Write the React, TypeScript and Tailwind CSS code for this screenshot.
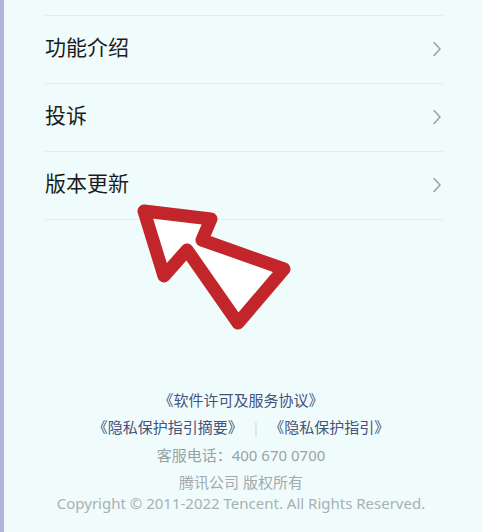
import React from "react";

const items = ["功能介绍", "投诉", "版本更新"];

const Chevron = () => (
  <svg width="10" height="16" viewBox="0 0 10 16" fill="none">
    <path d="M2 1.5 L8 8 L2 14.5" stroke="#9ea3a3" strokeWidth="1.6" strokeLinecap="round" strokeLinejoin="round" />
  </svg>
);

// red hand-drawn arrow that sits over the list
const Arrow = () => (
  <svg className="absolute left-0 top-0 pointer-events-none" width="482" height="532" viewBox="0 0 482 532">
    <path
      d="M140 211 L207 219 L198 240 L280 269 L234 323 L183 250 L160 276 Z"
      fill="#ffffff"
      stroke="#c3262a"
      strokeWidth="13"
      strokeLinejoin="round"
    />
  </svg>
);

export default function App() {
  return (
    <div
      className="relative w-[482px] h-[532px] overflow-hidden bg-[#f0fcfc] border-l-[4px] border-[#afb5db]"
      style={{ fontFamily: '"Noto Sans", "Noto Sans CJK SC", sans-serif' }}
    >
      <div className="ml-[41px] w-[398px] pt-[15px]">
        <div className="border-t border-[#e3eded]">
          {items.map((label) => (
            <div key={label} className="h-[68px] flex items-center justify-between border-b border-[#e3eded]">
              <span className="mb-[5px] text-[21px] text-[#1c1c1c]" style={{ fontFamily: '"Noto Sans CJK SC", sans-serif' }}>
                {label}
              </span>
              <span className="mr-[1px] mb-[2px] flex items-center">
                <Chevron />
              </span>
            </div>
          ))}
        </div>
      </div>

      <div className="absolute left-0 right-0 top-[386px] flex flex-col items-center text-[15px] -ml-[4px]">
        <div className="h-[28px] flex items-center text-[#46527a]">《软件许可及服务协议》</div>
        <div className="h-[27px] flex items-center text-[#46527a]">
          <span>《隐私保护指引摘要》</span>
          <span className="mx-[9px] text-[#d6dcdc]">|</span>
          <span>《隐私保护指引》</span>
        </div>
        <div className="h-[28px] flex items-center text-[#9aa2a4]">客服电话：400 670 0700</div>
        <div className="h-[26px] flex items-center text-[#a3aaac]">腾讯公司 版权所有</div>
        <div className="h-[16px] flex items-center text-[#a9b0b2]">Copyright © 2011-2022 Tencent. All Rights Reserved.</div>
      </div>

      <Arrow />
    </div>
  );
}
